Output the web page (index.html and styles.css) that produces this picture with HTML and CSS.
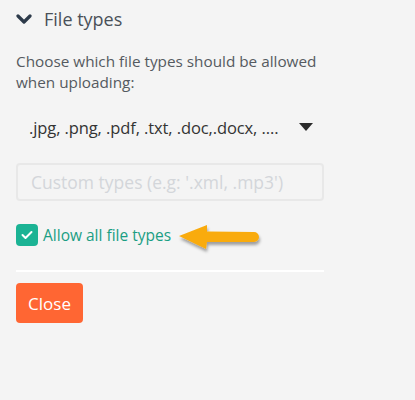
FILE: index.html
```html
<!DOCTYPE html>
<html lang="en">
<head>
    <meta charset="UTF-8">
    <title>File types</title>
    <link rel="stylesheet" href="styles.css">
</head>
<body>
    <div class="panel">
        <div class="panel-header">
            <svg class="chevron" width="16" height="11" viewBox="0 0 16 11">
                <path d="M2 2 L8 8 L14 2" fill="none" stroke="#2d3a4a" stroke-width="3.2" stroke-linecap="round" stroke-linejoin="round"/>
            </svg>
            <span class="panel-title">File types</span>
        </div>
        <p class="desc">Choose which file types should be allowed when uploading:</p>
        <div class="select">
            <span class="select-value">.jpg, .png, .pdf, .txt, .doc,.docx, ....</span>
            <span class="caret"></span>
        </div>
        <input class="custom" type="text" placeholder="Custom types (e.g: '.xml, .mp3')">
        <div class="check-row">
            <span class="checkbox">
                <svg width="12" height="10" viewBox="0 0 12 10">
                    <path d="M1.5 5 L4.5 8 L10.5 2" fill="none" stroke="#fff" stroke-width="2" stroke-linecap="round" stroke-linejoin="round"/>
                </svg>
            </span>
            <span class="check-label">Allow all file types</span>
            <svg class="pointer" width="90" height="34" viewBox="0 0 90 34">
                <defs>
                    <filter id="sh" x="-20%" y="-30%" width="140%" height="170%">
                        <feDropShadow dx="1" dy="3" stdDeviation="1.6" flood-color="#000" flood-opacity="0.35"/>
                    </filter>
                </defs>
                <g filter="url(#sh)">
                    <path d="M2 13 L30 2 L30 8.5 L77 9 A5 5 0 0 1 77 19 L30 19 L29 26 Z" fill="#f9ab0e"/>
                </g>
            </svg>
        </div>
        <hr class="divider">
        <button class="close-btn">Close</button>
    </div>
</body>
</html>
```

FILE: styles.css
```css
body {
    margin: 0;
    padding: 0;
    background-color: #f4f4f4;
    font-family: 'Open Sans', 'Segoe UI', sans-serif;
    color: #555a60;
}
.panel {
    width: 308px;
    padding: 6px 16px 0 16px;
}
.panel-header {
    display: flex;
    align-items: center;
    gap: 12px;
    height: 26px;
}
.chevron {
    margin-top: 1px;
}
.panel-title {
    font-size: 18px;
    color: #4a5058;
}
.desc {
    margin: 19px 0 0 0;
    font-size: 15.3px;
    line-height: 21px;
    color: #555a60;
}
.select {
    display: flex;
    align-items: center;
    justify-content: space-between;
    padding: 0 11px 0 13px;
    margin-top: 22px;
    height: 24px;
}
.select-value {
    font-size: 16.5px;
    letter-spacing: -0.1px;
    color: #333;
}
.caret {
    width: 0;
    height: 0;
    border-left: 7px solid transparent;
    border-right: 7px solid transparent;
    border-top: 8px solid #2b2b2b;
}
.custom {
    display: block;
    box-sizing: border-box;
    width: 308px;
    height: 38px;
    margin-top: 24px;
    padding: 0 13px;
    border: 2px solid #e8e8e8;
    border-radius: 4px;
    background-color: #f4f4f4;
    font-family: inherit;
    font-size: 17.5px;
    outline: none;
}
.custom::placeholder {
    color: #d3d6da;
}
.check-row {
    display: flex;
    align-items: center;
    margin-top: 22px;
    height: 24px;
    position: relative;
}
.checkbox {
    display: flex;
    align-items: center;
    justify-content: center;
    width: 22px;
    height: 22px;
    border-radius: 4px;
    background-color: #1bb394;
}
.check-label {
    margin-left: 5px;
    font-size: 15.5px;
    color: #1a9e83;
}
.pointer {
    position: absolute;
    left: 161px;
    top: 0;
}
.divider {
    margin: 23px 0 0 0;
    border: none;
    height: 2px;
    background-color: #fff;
}
.close-btn {
    margin-top: 11px;
    width: 67px;
    height: 40px;
    border: none;
    border-radius: 4px;
    background-color: #ff6633;
    color: #fff;
    font-family: inherit;
    font-size: 17px;
}
```
